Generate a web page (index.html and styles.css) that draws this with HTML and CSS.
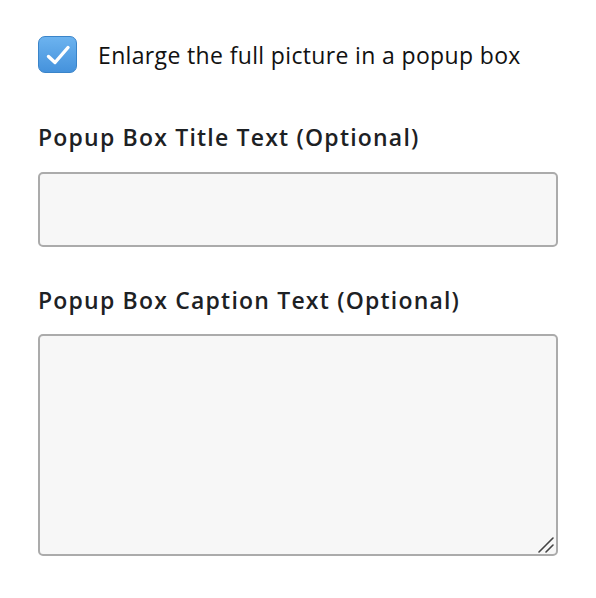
FILE: index.html
```html
<!DOCTYPE html>
<html lang="en">
<head>
	<meta charset="UTF-8">
	<title>Popup options</title>
	<link rel="stylesheet" href="styles.css">
</head>
<body>
	<div class="popup_form">
		<label class="check_row">
			<span class="check_box">
				<svg width="39" height="37" viewBox="0 0 39 37"><path d="M10.5 20.5 L17 26.5 L30 11.5" fill="none" stroke="#fff" stroke-width="3.4" stroke-linecap="round" stroke-linejoin="round"/></svg>
			</span>
			<span class="check_text">Enlarge the full picture in a popup box</span>
		</label>

		<div class="field">
			<h3>Popup Box Title Text (Optional)</h3>
			<input type="text" class="title_input">
		</div>

		<div class="field">
			<h3>Popup Box Caption Text (Optional)</h3>
			<div class="caption_wrap">
				<textarea class="caption_input"></textarea>
				<!-- resize grip in the corner -->
				<svg class="grip" width="16" height="16" viewBox="0 0 16 16"><path d="M1 15 L15 1 M8 15 L15 8" stroke="#444" stroke-width="1.6" stroke-linecap="round"/></svg>
			</div>
		</div>
	</div>
</body>
</html>
```

FILE: styles.css
```css
body{
	margin: 0;
	background: #fff;
	font-family: "Open Sans", "Lato", sans-serif;
	color: #1d2124;
}
.popup_form{
	display: flex;
	flex-direction: column;
	padding: 36px 38px 0 38px;
	width: 520px;
}
.check_row{
	display: flex;
	align-items: center;
	gap: 21px;
	height: 37px;
}
.check_box{
	box-sizing: border-box;
	width: 39px;
	height: 37px;
	border-radius: 7px;
	border: 1px solid #3a84c9;
	background: linear-gradient(#6cb3ef, #4592dc);
	display: flex;
	align-items: center;
	justify-content: center;
}
.check_box svg{
	flex: none;
}
.check_text{
	font-size: 23px;
	letter-spacing: 0.35px;
	color: #111;
}
.field h3{
	font-size: 23px;
	font-weight: 600;
	letter-spacing: 1.2px;
	margin: 0;
	line-height: 28px;
}
.field:nth-of-type(1) h3{
	margin-top: 50px;
	margin-bottom: 21px;
}
.field:nth-of-type(2) h3{
	margin-top: 39px;
	margin-bottom: 20px;
}
.title_input, .caption_input{
	display: block;
	box-sizing: border-box;
	width: 520px;
	background: #f7f7f7;
	border: 2px solid #ababab;
	border-radius: 5px;
	margin: 0;
}
.title_input{
	height: 75px;
}
.caption_wrap{
	position: relative;
	width: 520px;
}
.caption_input{
	height: 222px;
	resize: none;
}
.grip{
	position: absolute;
	right: 4px;
	bottom: 3px;
}
```
